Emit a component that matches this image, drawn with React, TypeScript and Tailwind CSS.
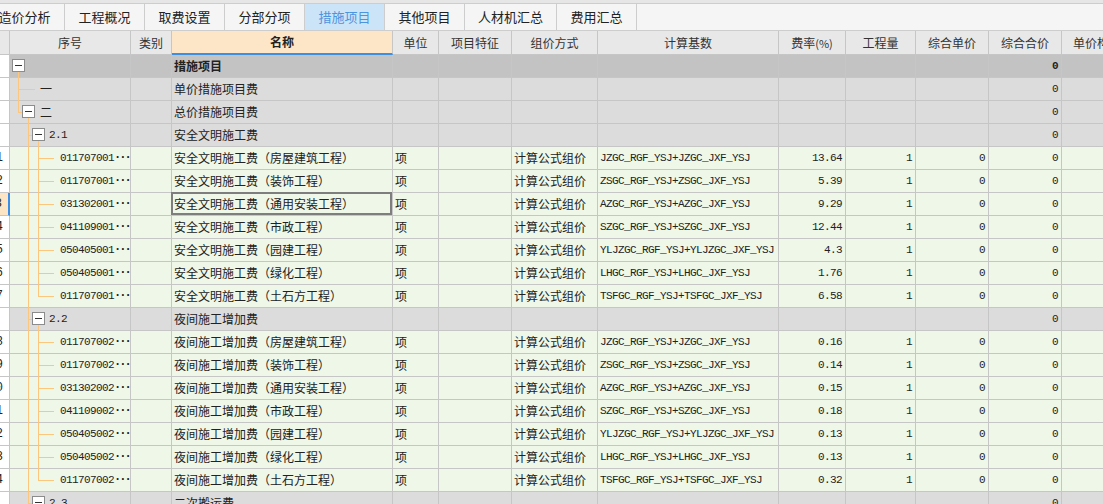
const CJK = { fontFamily: '"Noto Sans CJK SC", "Liberation Sans", sans-serif' };
const MONO = { fontFamily: '"Liberation Mono", "Noto Sans CJK SC", monospace' };

const tabs = [
  { label: "造价分析", w: "w-[80px] -ml-[15px]" },
  { label: "工程概况", w: "w-[80px]" },
  { label: "取费设置", w: "w-[80px]" },
  { label: "分部分项", w: "w-[80px]" },
  { label: "措施项目", w: "w-[80px]", active: true },
  { label: "其他项目", w: "w-[80px]" },
  { label: "人材机汇总", w: "w-[92px]" },
  { label: "费用汇总", w: "w-[80px]" },
];

const headers = [
  { label: "序号", w: "w-[121px]" },
  { label: "类别", w: "w-[41px]" },
  { label: "名称", w: "w-[221px]", active: true },
  { label: "单位", w: "w-[46px]" },
  { label: "项目特征", w: "w-[73px]" },
  { label: "组价方式", w: "w-[86px]" },
  { label: "计算基数", w: "w-[181px]" },
  { label: "费率(%)", w: "w-[67px]" },
  { label: "工程量", w: "w-[70px]" },
  { label: "综合单价", w: "w-[73px]" },
  { label: "综合合价", w: "w-[73px]" },
  { label: "单价构成", w: "w-[73px]" },
  { label: "", w: "w-[120px]" },
];

type Kind = "root" | "l1" | "l1box" | "l2" | "leaf";
type Row = {
  kind: Kind;
  code?: string;
  name: string;
  num?: number;
  base?: string;
  rate?: string;
  last?: boolean;
  selected?: boolean;
};

const rows: Row[] = [
  { kind: "root", name: "措施项目" },
  { kind: "l1", code: "一", name: "单价措施项目费" },
  { kind: "l1box", code: "二", name: "总价措施项目费" },
  { kind: "l2", code: "2.1", name: "安全文明施工费" },
  { kind: "leaf", num: 1, code: "011707001", name: "安全文明施工费（房屋建筑工程）", base: "JZGC_RGF_YSJ+JZGC_JXF_YSJ", rate: "13.64" },
  { kind: "leaf", num: 2, code: "011707001", name: "安全文明施工费（装饰工程）", base: "ZSGC_RGF_YSJ+ZSGC_JXF_YSJ", rate: "5.39" },
  { kind: "leaf", num: 3, code: "031302001", name: "安全文明施工费（通用安装工程）", base: "AZGC_RGF_YSJ+AZGC_JXF_YSJ", rate: "9.29", selected: true },
  { kind: "leaf", num: 4, code: "041109001", name: "安全文明施工费（市政工程）", base: "SZGC_RGF_YSJ+SZGC_JXF_YSJ", rate: "12.44" },
  { kind: "leaf", num: 5, code: "050405001", name: "安全文明施工费（园建工程）", base: "YLJZGC_RGF_YSJ+YLJZGC_JXF_YSJ", rate: "4.3" },
  { kind: "leaf", num: 6, code: "050405001", name: "安全文明施工费（绿化工程）", base: "LHGC_RGF_YSJ+LHGC_JXF_YSJ", rate: "1.76" },
  { kind: "leaf", num: 7, code: "011707001", name: "安全文明施工费（土石方工程）", base: "TSFGC_RGF_YSJ+TSFGC_JXF_YSJ", rate: "6.58", last: true },
  { kind: "l2", code: "2.2", name: "夜间施工增加费" },
  { kind: "leaf", num: 8, code: "011707002", name: "夜间施工增加费（房屋建筑工程）", base: "JZGC_RGF_YSJ+JZGC_JXF_YSJ", rate: "0.16" },
  { kind: "leaf", num: 9, code: "011707002", name: "夜间施工增加费（装饰工程）", base: "ZSGC_RGF_YSJ+ZSGC_JXF_YSJ", rate: "0.14" },
  { kind: "leaf", num: 10, code: "031302002", name: "夜间施工增加费（通用安装工程）", base: "AZGC_RGF_YSJ+AZGC_JXF_YSJ", rate: "0.15" },
  { kind: "leaf", num: 11, code: "041109002", name: "夜间施工增加费（市政工程）", base: "SZGC_RGF_YSJ+SZGC_JXF_YSJ", rate: "0.18" },
  { kind: "leaf", num: 12, code: "050405002", name: "夜间施工增加费（园建工程）", base: "YLJZGC_RGF_YSJ+YLJZGC_JXF_YSJ", rate: "0.13" },
  { kind: "leaf", num: 13, code: "050405002", name: "夜间施工增加费（绿化工程）", base: "LHGC_RGF_YSJ+LHGC_JXF_YSJ", rate: "0.13" },
  { kind: "leaf", num: 14, code: "011707002", name: "夜间施工增加费（土石方工程）", base: "TSFGC_RGF_YSJ+TSFGC_JXF_YSJ", rate: "0.32", last: true },
  { kind: "l2", code: "2.3", name: "二次搬运费" },
];

function Box({ left }: { left: string }) {
  return (
    <span className={`absolute top-[4px] ${left} flex h-[13px] w-[13px] items-center justify-center border border-[#8c8c8c] bg-white`}>
      <span className="h-px w-[7px] bg-[#333]" />
    </span>
  );
}

const line = "absolute bg-[#fcc77c]";

function TreeCell({ row, index }: { row: Row; index: number }) {
  const k = row.kind;
  return (
    <div className="relative h-full w-full">
      {/* level 0 connector */}
      {k === "root" && <span className={`${line} left-[8px] top-[17px] h-[6px] w-px`} />}
      {k === "l1" && <span className={`${line} left-[8px] top-0 h-[23px] w-px`} />}
      {k === "l1box" && <span className={`${line} left-[8px] top-0 h-[11px] w-px`} />}
      {k === "l1" && <span className={`${line} left-[8px] top-[11px] h-px w-[17px]`} />}
      {k === "l1box" && <span className={`${line} left-[8px] top-[11px] h-px w-[4px]`} />}
      {/* level 1 connector */}
      {k === "l1box" && <span className={`${line} left-[18px] top-[17px] h-[6px] w-px`} />}
      {(k === "l2" || k === "leaf") && (
        <span className={`${line} left-[18px] top-0 h-[23px] w-px`} />
      )}
      {k === "l2" && <span className={`${line} left-[18px] top-[11px] h-px w-[4px]`} />}
      {/* level 2 connector */}
      {k === "l2" && index !== rows.length - 1 && (
        <span className={`${line} left-[28px] top-[17px] h-[6px] w-px`} />
      )}
      {k === "leaf" && (
        <span className={`${line} left-[28px] top-0 w-px ${row.last ? "h-[12px]" : "h-[23px]"}`} />
      )}
      {k === "leaf" && <span className={`${line} left-[28px] top-[11px] h-px w-[16px]`} />}

      {k === "root" && <Box left="left-[2px]" />}
      {k === "l1box" && <Box left="left-[12px]" />}
      {k === "l2" && <Box left="left-[22px]" />}

      {(k === "l1" || k === "l1box") && (
        <span className="absolute left-[30px] top-0 text-[12px] leading-[22px]" style={CJK}>
          {row.code}
        </span>
      )}
      {k === "l2" && (
        <span className="absolute left-[39px] top-0 text-[11px] tracking-[-0.6px] leading-[22px]" style={MONO}>
          {row.code}
        </span>
      )}
      {k === "leaf" && (
        <span className="absolute left-[50px] top-0 whitespace-nowrap text-[11px] leading-[22px]" style={MONO}>
          <span className="tracking-[-0.6px]">{row.code}</span>
          <span className="text-[12px] font-bold tracking-[-2px]" style={MONO}>
            ···
          </span>
        </span>
      )}
    </div>
  );
}

const cell = "box-border h-[23px] shrink-0 border-r border-b border-[#c6c6c6] overflow-hidden whitespace-nowrap leading-[22px]";

function DataRow({ row, index }: { row: Row; index: number }) {
  const group = row.kind !== "leaf";
  const bg = row.kind === "root" ? "bg-[#c3c3c3]" : group ? "bg-[#dcdcdc]" : "bg-[#eef7e8]";
  const num = "text-[11px] tracking-[-0.6px] text-right pr-[3px]";
  return (
    <div className="flex text-[#222]">
      <div
        className={`box-border flex h-[23px] w-[10px] shrink-0 justify-end overflow-hidden border-b border-[#c6c6c6] pr-[6px] text-[12px] leading-[22px] ${
          row.selected ? "border-r-2 border-r-[#3b8ee8] bg-[#fde4c4] pr-[5px]" : "border-r bg-white"
        }`}
        style={MONO}
      >
        {row.num ?? ""}
      </div>
      <div className={`${cell} ${bg} w-[121px] overflow-visible`}>
        <TreeCell row={row} index={index} />
      </div>
      <div className={`${cell} ${bg} w-[41px]`} />
      <div className={`${cell} ${bg} relative w-[221px] overflow-visible pl-[2px] text-[12px] ${row.kind === "root" ? "font-bold" : ""}`} style={CJK}>
        {row.name}
        {row.selected && (
          <span className="absolute -left-px -top-px bottom-0 right-0 border-2 border-[#7e7e7e]" />
        )}
      </div>
      <div className={`${cell} ${bg} w-[46px] pl-[2px] text-[12px]`} style={CJK}>
        {group ? "" : "项"}
      </div>
      <div className={`${cell} ${bg} w-[73px]`} />
      <div className={`${cell} ${bg} w-[86px] pl-[2px] text-[12px]`} style={CJK}>
        {group ? "" : "计算公式组价"}
      </div>
      <div className={`${cell} ${bg} w-[181px] pl-[2px] text-[11px] tracking-[-0.6px]`} style={MONO}>
        {row.base}
      </div>
      <div className={`${cell} ${bg} w-[67px] ${num}`} style={MONO}>
        {row.rate}
      </div>
      <div className={`${cell} ${bg} w-[70px] ${num}`} style={MONO}>
        {group ? "" : "1"}
      </div>
      <div className={`${cell} ${bg} w-[73px] ${num}`} style={MONO}>
        {group ? "" : "0"}
      </div>
      <div className={`${cell} ${bg} w-[73px] ${num} ${row.kind === "root" ? "font-bold" : ""}`} style={MONO}>
        0
      </div>
      <div className={`${cell} ${bg} w-[73px]`} />
      <div className={`${cell} ${bg} w-[120px]`} />
    </div>
  );
}

export default function App() {
  return (
    <div className="h-[504px] w-[1103px] overflow-hidden bg-white" style={CJK}>
      {/* tab strip */}
      <div className="h-[3px] bg-[#e6e6e6]" />
      <div className="flex h-[28px] border-y border-[#cdcdcd] bg-[#f5f5f5]">
        {tabs.map((t) => (
          <div
            key={t.label}
            className={`${t.w} box-border flex shrink-0 items-center justify-center border-r border-[#cdcdcd] text-[13px] ${
              t.active ? "bg-[#cce4f8] text-[#4d94df]" : "text-[#222]"
            }`}
          >
            {t.label}
          </div>
        ))}
      </div>
      {/* header */}
      <div className="flex bg-[#e8e8e8] text-[12px] text-[#333]">
        <div className="box-border h-[24px] w-[10px] shrink-0 border-r border-b border-[#c6c6c6]" />
        {headers.map((h) => (
          <div
            key={h.label + h.w}
            className={`${h.w} box-border flex h-[24px] shrink-0 items-center justify-center overflow-hidden whitespace-nowrap border-r border-[#c6c6c6] ${
              h.active ? "border-b-2 border-b-[#3d8fe6] bg-[#fde6c8] font-bold text-[#222]" : "border-b"
            } ${h.label === "单价构成" ? "justify-start pl-[11px]" : ""}`}
          >
            {h.label === "费率(%)" ? (
              <span>
                费率<span className="text-[11px]">(%)</span>
              </span>
            ) : (
              h.label
            )}
          </div>
        ))}
      </div>
      {rows.map((r, i) => (
        <DataRow key={i} row={r} index={i} />
      ))}
    </div>
  );
}
